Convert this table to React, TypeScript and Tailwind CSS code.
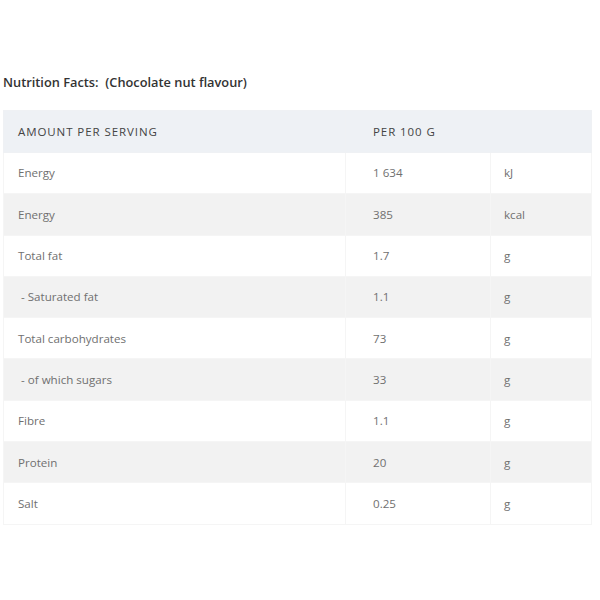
const rows: [string, string, string][] = [
  ["Energy", "1 634", "kJ"],
  ["Energy", "385", "kcal"],
  ["Total fat", "1.7", "g"],
  ["\u00a0- Saturated fat", "1.1", "g"],
  ["Total carbohydrates", "73", "g"],
  ["\u00a0- of which sugars", "33", "g"],
  ["Fibre", "1.1", "g"],
  ["Protein", "20", "g"],
  ["Salt", "0.25", "g"],
];

export default function App() {
  return (
    <div className="w-[600px] h-[600px] bg-white pt-[74px] px-[3px] font-['Open_Sans',sans-serif]">
      <h2 className="text-[12.8px] font-semibold text-[#333] leading-4 mb-[20px] whitespace-pre">
        Nutrition Facts:  (Chocolate nut flavour)
      </h2>
      <table className="w-[589px] border-collapse table-fixed text-[11.6px]">
        <colgroup>
          <col className="w-[342px]" />
          <col className="w-[145px]" />
          <col />
        </colgroup>
        <thead>
          <tr className="bg-[#eef1f5] h-[42px] text-[#444] uppercase">
            <th className="text-left font-medium tracking-[0.08em] text-[11.5px] pl-[14px] border border-[#eff1f4]">Amount per serving</th>
            <th className="text-left font-medium tracking-[0.08em] text-[11.5px] pl-[27px] border border-[#eff1f4]" colSpan={2}>Per 100 g</th>
          </tr>
        </thead>
        <tbody className="text-[#707070]">
          {rows.map(([name, value, unit], i) => (
            <tr key={i} className={`h-[41.3px] ${i % 2 === 1 ? "bg-[#f2f2f2]" : "bg-white"}`}>
              <td className="pl-[14px] border border-[#f5f5f5] whitespace-pre">{name}</td>
              <td className="pl-[27px] border border-[#f5f5f5]">{value}</td>
              <td className="pl-[13px] border border-[#f5f5f5]">{unit}</td>
            </tr>
          ))}
        </tbody>
      </table>
    </div>
  );
}
